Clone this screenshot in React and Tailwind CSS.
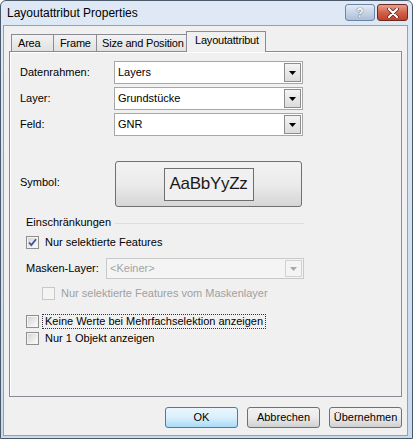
const font = "font-['Liberation_Sans',Arial,sans-serif]";

const ArrowDown = ({ disabled }) => (
  <svg width="7" height="4" viewBox="0 0 7 4">
    <path d="M0 0h7L3.5 4z" fill={disabled ? "#a8a8a8" : "#000"} />
  </svg>
);

const Dropdown = ({ value, width, disabled, height = "h-[23px]" }) => (
  <div
    className={`${width} ${height} flex items-stretch border ${
      disabled ? "border-[#c9c9c9] bg-[#f4f4f4]" : "border-[#a7a7a7] bg-white"
    }`}
  >
    <div
      className={`flex-1 flex items-center pl-[3px] text-[11px] ${
        disabled ? "text-[#a3a3a3]" : "text-black"
      }`}
    >
      {value}
    </div>
    <div className="p-[1px] flex">
      <div
        className={`w-[17px] flex items-center justify-center border ${
          disabled
            ? "border-[#d2d2d2] bg-[#f4f4f4]"
            : "border-[#8d8d8d] bg-gradient-to-b from-[#f4f4f4] to-[#dcdcdc]"
        }`}
      >
        <ArrowDown disabled={disabled} />
      </div>
    </div>
  </div>
);

const Checkbox = ({ checked, disabled }) => (
  <div
    className={`w-[13px] h-[13px] border p-[1px] shrink-0 ${
      disabled ? "border-[#c8c8c8] bg-[#f4f4f4]" : "border-[#8f8f8f] bg-[#f4f4f4]"
    }`}
  >
    <div
      className={`w-full h-full flex items-center justify-center ${
        disabled
          ? "bg-[#f4f4f4]"
          : "bg-gradient-to-br from-[#d5d5d5] to-[#fbfbfb]"
      }`}
    >
      {checked && (
        <svg width="9" height="9" viewBox="0 0 9 9">
          <path
            d="M1 4.5l2.3 2.6L8 1.2"
            fill="none"
            stroke="#3a5796"
            strokeWidth="1.8"
          />
        </svg>
      )}
    </div>
  </div>
);

const Button = ({ children, primary }) => (
  <div
    className={`w-[73px] h-[21px] rounded-[3px] border flex items-center justify-center text-[11px] text-black ${
      primary
        ? "border-[#3c7fb1] bg-gradient-to-b from-[#eaf6fd] via-[#d9f0fc] to-[#a9dbf6]"
        : "border-[#707070] bg-gradient-to-b from-[#f2f2f2] via-[#ebebeb] to-[#d0d0d0]"
    }`}
  >
    {children}
  </div>
);

export default function App() {
  return (
    <div
      className={`${font} w-[413px] h-[439px] flex flex-col border border-[#4b5a6b] rounded-t-[6px] bg-gradient-to-b from-[#dfe9f6] to-[#c9d9ee] overflow-hidden`}
    >
      {/* Title bar */}
      <div className="h-[25px] flex items-center justify-between pl-[6px] pr-[4px]">
        <span className="text-[12px] text-black">Layoutattribut Properties</span>
        <div className="flex items-start gap-[2px] self-start mt-[3px]">
          <div className="w-[30px] h-[17px] rounded-[3px] border border-[#6f84a4] bg-gradient-to-b from-[#e3ebf6] to-[#aabfdb] flex items-center justify-center text-[12px] font-bold text-white [text-shadow:0_0_1px_#4a5d78,0_0_1px_#4a5d78]">
            ?
          </div>
          <div className="w-[31px] h-[17px] rounded-[3px] border border-[#6b2a20] bg-gradient-to-b from-[#e8a08e] via-[#d2614a] to-[#c0412b] flex items-center justify-center">
            <svg width="12" height="10" viewBox="0 0 12 10">
              <path
                d="M2 1l8 8M10 1l-8 8"
                stroke="#5a1e15"
                strokeWidth="3.6"
                strokeLinecap="round"
              />
              <path
                d="M2 1l8 8M10 1l-8 8"
                stroke="#fff"
                strokeWidth="2.2"
                strokeLinecap="round"
              />
            </svg>
          </div>
        </div>
      </div>

      {/* Client area */}
      <div className="flex-1 ml-[2px] mr-[4px] mb-[2px] bg-[#f0f0f0] border border-[#8ea2bd] flex flex-col px-[5px] pt-[5px] pb-[7px]">
        {/* Tabs */}
        <div className="h-[21px] flex items-end pl-[2px] -mb-px relative z-10 text-[11px] text-black whitespace-nowrap tracking-[-0.2px]">
          <div className="w-[42px] h-[17px] mb-px border-t border-l border-[#898c95] bg-gradient-to-b from-[#f3f3f3] to-[#e1e1e1] pl-[6px] flex items-center">
            Area
          </div>
          <div className="w-[43px] h-[17px] mb-px border-t border-l border-[#898c95] bg-gradient-to-b from-[#f3f3f3] to-[#e1e1e1] pl-[6px] flex items-center">
            Frame
          </div>
          <div className="w-[90px] h-[17px] mb-px border-t border-l border-[#898c95] bg-gradient-to-b from-[#f3f3f3] to-[#e1e1e1] pl-[5px] flex items-center overflow-hidden">
            Size and Position
          </div>
          <div className="w-[80px] h-[21px] border-t border-x border-[#898c95] bg-[#f0f0f0] pl-[8px] pb-[3px] flex items-center">
            Layoutattribut
          </div>
        </div>

        {/* Panel */}
        <div className="h-[346px] border border-[#898c95] bg-[#f0f0f0] text-[11px] text-black">
          <div className="h-full border-t border-l border-white pl-[9px] pt-[8px]">
            <div className="flex flex-col gap-[3px]">
              <div className="flex items-center">
                <div className="w-[94px]">Datenrahmen:</div>
                <Dropdown value="Layers" width="w-[189px]" />
              </div>
              <div className="flex items-center">
                <div className="w-[94px]">Layer:</div>
                <Dropdown value="Grundstücke" width="w-[189px]" />
              </div>
              <div className="flex items-center">
                <div className="w-[94px]">Feld:</div>
                <Dropdown value="GNR" width="w-[189px]" />
              </div>
            </div>

            <div className="flex items-center mt-[25px]">
              <div className="w-[95px] pb-[3px]">Symbol:</div>
              <div className="w-[187px] h-[46px] rounded-[3px] border border-[#707070] bg-gradient-to-b from-[#f2f2f2] via-[#ebebeb] to-[#d6d6d6] flex items-center justify-center">
                <div className="w-[90px] h-[33px] border border-[#6e6e6e] bg-[#f0f0f0] flex items-center justify-center text-[17px] text-[#1a1a1a] tracking-[-0.3px]">
                  AaBbYyZz
                </div>
              </div>
            </div>

            {/* Einschränkungen group */}
            <div className="mt-[7px] pl-[6px] w-[284px]">
              <div className="flex items-center gap-[4px] h-[16px]">
                <span>Einschränkungen</span>
                <div className="flex-1 h-px bg-[#d5dfe5] mt-[2px]" />
              </div>

              <div className="flex items-center gap-[6px] mt-[6px] h-[13px]">
                <Checkbox checked />
                <span>Nur selektierte Features</span>
              </div>

              <div className="flex items-center mt-[9px]">
                <div className="w-[80px]">Masken-Layer:</div>
                <Dropdown value="<Keiner>" width="w-[198px]" height="h-[21px]" disabled />
              </div>

              <div className="flex items-center gap-[6px] mt-[8px] pl-[16px] h-[13px] text-[#a0a0a0]">
                <Checkbox disabled />
                <span>Nur selektierte Features vom Maskenlayer</span>
              </div>

              <div className="flex items-center gap-[4px] mt-[15px] h-[13px]">
                <Checkbox />
                <span className="outline outline-1 outline-dotted outline-[#333] px-[2px] leading-[13px]">
                  Keine Werte bei Mehrfachselektion anzeigen
                </span>
              </div>

              <div className="flex items-center gap-[6px] mt-[4px] h-[13px]">
                <Checkbox />
                <span>Nur 1 Objekt anzeigen</span>
              </div>
            </div>
          </div>
        </div>

        {/* Buttons */}
        <div className="mt-[10px] flex justify-end gap-[9px]">
          <Button primary>OK</Button>
          <Button>Abbrechen</Button>
          <Button>Übernehmen</Button>
        </div>
      </div>
    </div>
  );
}
